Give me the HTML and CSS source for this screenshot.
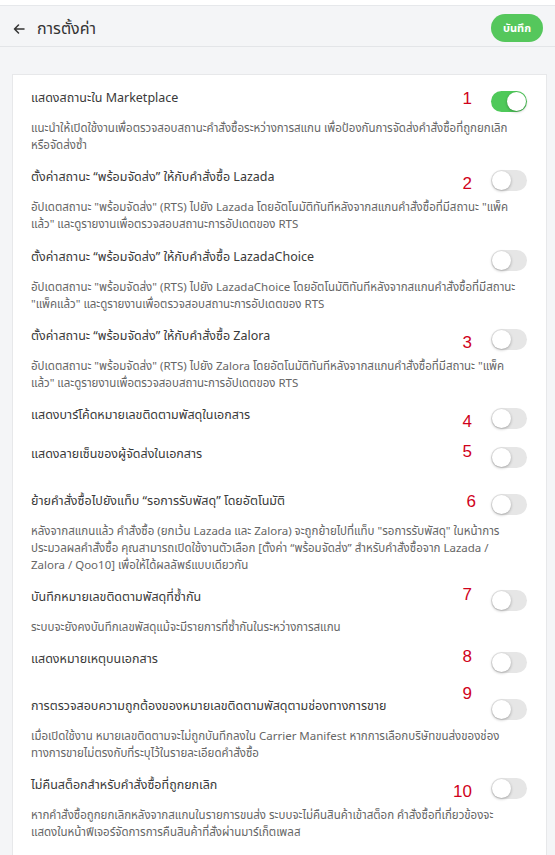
FILE: index.html
```html
<!DOCTYPE html>
<html>
<head>
  <meta charset="utf-8">
  <title>การตั้งค่า</title>
  <link rel="stylesheet" href="styles.css">
</head>
<body>
  <div class="app">
    <header class="topbar">
      <div class="topbar-left">
        <svg class="back" width="12" height="10" viewBox="0 0 12 10">
          <path d="M11 5H1.5M5.5 1L1.5 5l4 4" fill="none" stroke="#333" stroke-width="1.5" stroke-linecap="round" stroke-linejoin="round"/>
        </svg>
        <span class="page-title">การตั้งค่า</span>
      </div>
      <button class="save">บันทึก</button>
    </header>

    <div class="card">
      <div class="item">
        <div class="item-head">
          <div class="item-title">แสดงสถานะใน Marketplace</div>
          <span class="toggle on"></span>
        </div>
        <div class="item-desc">
          <span class="line">แนะนำให้เปิดใช้งานเพื่อตรวจสอบสถานะคำสั่งซื้อระหว่างการสแกน เพื่อป้องกันการจัดส่งคำสั่งซื้อที่ถูกยกเลิก</span>
          <span class="line">หรือจัดส่งซ้ำ</span>
        </div>
        <span class="mark">1</span>
      </div>

      <div class="item">
        <div class="item-head">
          <div class="item-title">ตั้งค่าสถานะ “พร้อมจัดส่ง” ให้กับคำสั่งซื้อ Lazada</div>
          <span class="toggle"></span>
        </div>
        <div class="item-desc">
          <span class="line">อัปเดตสถานะ "พร้อมจัดส่ง" (RTS) ไปยัง Lazada โดยอัตโนมัติทันทีหลังจากสแกนคำสั่งซื้อที่มีสถานะ "แพ็ค</span>
          <span class="line">แล้ว" และดูรายงานเพื่อตรวจสอบสถานะการอัปเดตของ RTS</span>
        </div>
        <span class="mark low">2</span>
      </div>

      <div class="item">
        <div class="item-head">
          <div class="item-title">ตั้งค่าสถานะ “พร้อมจัดส่ง” ให้กับคำสั่งซื้อ LazadaChoice</div>
          <span class="toggle"></span>
        </div>
        <div class="item-desc">
          <span class="line">อัปเดตสถานะ "พร้อมจัดส่ง" (RTS) ไปยัง LazadaChoice โดยอัตโนมัติทันทีหลังจากสแกนคำสั่งซื้อที่มีสถานะ</span>
          <span class="line">"แพ็คแล้ว" และดูรายงานเพื่อตรวจสอบสถานะการอัปเดตของ RTS</span>
        </div>
      </div>

      <div class="item">
        <div class="item-head">
          <div class="item-title">ตั้งค่าสถานะ “พร้อมจัดส่ง” ให้กับคำสั่งซื้อ Zalora</div>
          <span class="toggle"></span>
        </div>
        <div class="item-desc">
          <span class="line">อัปเดตสถานะ "พร้อมจัดส่ง" (RTS) ไปยัง Zalora โดยอัตโนมัติทันทีหลังจากสแกนคำสั่งซื้อที่มีสถานะ "แพ็ค</span>
          <span class="line">แล้ว" และดูรายงานเพื่อตรวจสอบสถานะการอัปเดตของ RTS</span>
        </div>
        <span class="mark low">3</span>
      </div>

      <div class="item tight">
        <div class="item-head">
          <div class="item-title">แสดงบาร์โค้ดหมายเลขติดตามพัสดุในเอกสาร</div>
          <span class="toggle"></span>
        </div>
        <span class="mark low">4</span>
      </div>

      <div class="item loose">
        <div class="item-head">
          <div class="item-title">แสดงลายเซ็นของผู้จัดส่งในเอกสาร</div>
          <span class="toggle"></span>
        </div>
        <span class="mark up">5</span>
      </div>

      <div class="item">
        <div class="item-head">
          <div class="item-title">ย้ายคำสั่งซื้อไปยังแท็บ “รอการรับพัสดุ” โดยอัตโนมัติ</div>
          <span class="toggle"></span>
        </div>
        <div class="item-desc">
          <span class="line">หลังจากสแกนแล้ว คำสั่งซื้อ (ยกเว้น Lazada และ Zalora) จะถูกย้ายไปที่แท็บ "รอการรับพัสดุ" ในหน้าการ</span>
          <span class="line">ประมวลผลคำสั่งซื้อ คุณสามารถเปิดใช้งานตัวเลือก [ตั้งค่า “พร้อมจัดส่ง” สำหรับคำสั่งซื้อจาก Lazada /</span>
          <span class="line">Zalora / Qoo10] เพื่อให้ได้ผลลัพธ์แบบเดียวกัน</span>
        </div>
        <span class="mark shift">6</span>
      </div>

      <div class="item">
        <div class="item-head">
          <div class="item-title">บันทึกหมายเลขติดตามพัสดุที่ซ้ำกัน</div>
          <span class="toggle"></span>
        </div>
        <div class="item-desc">
          <span class="line">ระบบจะยังคงบันทึกเลขพัสดุแม้จะมีรายการที่ซ้ำกันในระหว่างการสแกน</span>
        </div>
        <span class="mark up">7</span>
      </div>

      <div class="item loose">
        <div class="item-head">
          <div class="item-title">แสดงหมายเหตุบนเอกสาร</div>
          <span class="toggle"></span>
        </div>
        <span class="mark up">8</span>
      </div>

      <div class="item">
        <div class="item-head">
          <div class="item-title">การตรวจสอบความถูกต้องของหมายเลขติดตามพัสดุตามช่องทางการขาย</div>
          <span class="toggle"></span>
        </div>
        <div class="item-desc">
          <span class="line">เมื่อเปิดใช้งาน หมายเลขติดตามจะไม่ถูกบันทึกลงใน Carrier Manifest หากการเลือกบริษัทขนส่งของช่อง</span>
          <span class="line">ทางการขายไม่ตรงกับที่ระบุไว้ในรายละเอียดคำสั่งซื้อ</span>
        </div>
        <span class="mark high">9</span>
      </div>

      <div class="item">
        <div class="item-head">
          <div class="item-title">ไม่คืนสต็อกสำหรับคำสั่งซื้อที่ถูกยกเลิก</div>
          <span class="toggle"></span>
        </div>
        <div class="item-desc">
          <span class="line">หากคำสั่งซื้อถูกยกเลิกหลังจากสแกนในรายการขนส่ง ระบบจะไม่คืนสินค้าเข้าสต็อก คำสั่งซื้อที่เกี่ยวข้องจะ</span>
          <span class="line">แสดงในหน้าฟีเจอร์จัดการการคืนสินค้าที่สั่งผ่านมาร์เก็ตเพลส</span>
        </div>
        <span class="mark low">10</span>
      </div>
    </div>
  </div>
</body>
</html>
```

FILE: styles.css
```css
html, body {
  margin: 0;
  padding: 0;
}

body {
  background-color: #fff;
  padding-top: 5px;
  font-family: "Noto Sans Thai", "Noto Sans", sans-serif;
  color: #333;
}

.app {
  background-color: #f4f5f7;
  border-top: 1px solid #e6e8eb;
  min-height: 850px;
}

.topbar {
  height: 40px;
  display: flex;
  align-items: center;
  justify-content: space-between;
  padding: 0 12px 0 13px;
  border-bottom: 1px solid #e3e5e8;
}

.topbar-left {
  display: flex;
  align-items: center;
  margin-top: 5px;
}

.back {
  margin-right: 12px;
}

.page-title {
  font-size: 16px;
  color: #333;
}

.save {
  border: none;
  background-color: #55c75c;
  color: #fff;
  font-family: inherit;
  font-size: 11px;
  font-weight: bold;
  height: 28px;
  width: 52px;
  border-radius: 14px;
  padding: 0;
  margin-top: 4px;
}

.card {
  background-color: #fff;
  border: 1px solid #e7e8ea;
  margin: 27px 8px 0 12px;
  padding: 14px 19px 30px 18px;
}

.item {
  position: relative;
  margin-bottom: 14.3px;
}

.item.tight {
  margin-bottom: 19.3px;
}

.item.loose {
  margin-bottom: 26.3px;
}

.item-head {
  display: flex;
  justify-content: space-between;
  align-items: flex-start;
  height: 20px;
}

.item-title {
  height: 20px;
  font-size: 12.5px;
  line-height: 20px;
  color: #3a3a3a;
  white-space: nowrap;
}

.item-desc {
  margin-top: 11px;
  font-size: 11.5px;
  line-height: 17px;
  color: #666;
}

.item-desc .line {
  display: block;
  height: 17px;
  white-space: nowrap;
}

.toggle {
  position: relative;
  flex: none;
  width: 36px;
  height: 21px;
  margin-top: 2px;
  border-radius: 11px;
  background-color: #e6e6e6;
}

.toggle::after {
  content: "";
  position: absolute;
  top: 1px;
  left: 1px;
  width: 19px;
  height: 19px;
  border-radius: 50%;
  background-color: #fff;
  box-shadow: 0 1px 3px rgba(0, 0, 0, 0.3);
}

.toggle.on {
  background-color: #4fc95a;
}

.toggle.on::after {
  left: 16px;
}

.mark {
  position: absolute;
  right: 55px;
  top: 0;
  font-family: "Liberation Sans", sans-serif;
  font-size: 17px;
  line-height: 20px;
  color: #d0021b;
}

.mark.low {
  top: 6px;
}

.mark.up {
  top: -3px;
}

.mark.high {
  top: -13px;
}

.mark.shift {
  right: 51px;
}
```
